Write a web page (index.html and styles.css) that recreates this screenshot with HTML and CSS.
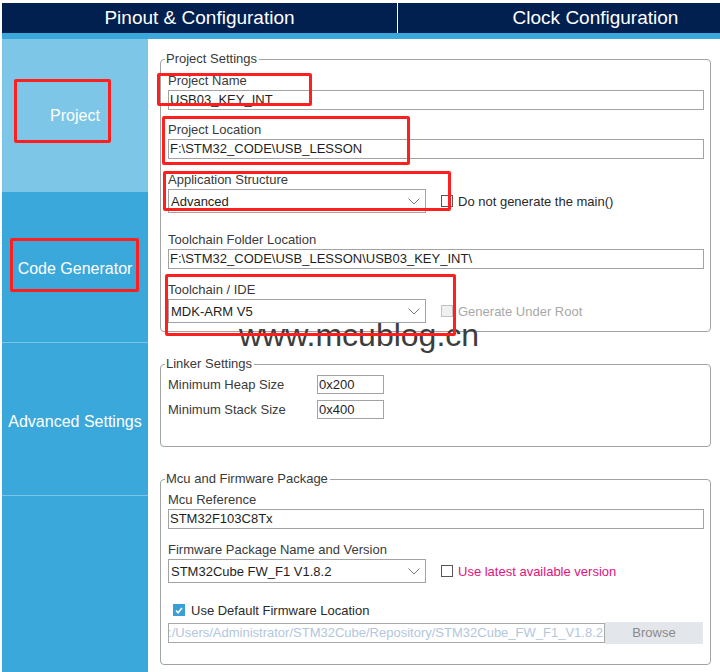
FILE: index.html
```html
<!DOCTYPE html>
<html>
<head>
<meta charset="utf-8">
<link rel="stylesheet" href="styles.css">
</head>
<body>
<div class="app">
  <div class="header">
    <div class="htab htab-first">Pinout &amp; Configuration</div>
    <div class="htab">Clock Configuration</div>
  </div>
  <div class="stripe"></div>
  <div class="main">
    <div class="sidebar">
      <div class="stab stab-active">Project</div>
      <div class="stab stab-code">Code Generator</div>
      <div class="stab stab-adv">Advanced Settings</div>
      <div class="stab stab-rest"></div>
    </div>
    <div class="content">
      <fieldset class="box box-project">
        <legend>Project Settings</legend>
        <div class="field f-gap12">
          <div class="label">Project Name</div>
          <div class="input">USB03_KEY_INT</div>
        </div>
        <div class="field f-gap13">
          <div class="label">Project Location</div>
          <div class="input">F:\STM32_CODE\USB_LESSON</div>
        </div>
        <div class="field f-gap19">
          <div class="label">Application Structure</div>
          <div class="row">
            <div class="select"><span>Advanced</span><svg class="chev" width="12" height="7" viewBox="0 0 12 7"><polyline points="0.5,0.5 6,6 11.5,0.5" fill="none" stroke="#7a7a7a" stroke-width="1"/></svg></div>
            <div class="check"><span class="cb"></span><span class="cbtext">Do not generate the main()</span></div>
          </div>
        </div>
        <div class="field f-gap13">
          <div class="label">Toolchain Folder Location</div>
          <div class="input">F:\STM32_CODE\USB_LESSON\USB03_KEY_INT\</div>
        </div>
        <div class="field">
          <div class="label">Toolchain / IDE</div>
          <div class="row">
            <div class="select"><span>MDK-ARM V5</span><svg class="chev" width="12" height="7" viewBox="0 0 12 7"><polyline points="0.5,0.5 6,6 11.5,0.5" fill="none" stroke="#7a7a7a" stroke-width="1"/></svg></div>
            <div class="check check-disabled"><span class="cb cb-disabled"></span><span class="cbtext">Generate Under Root</span></div>
          </div>
        </div>
      </fieldset>

      <fieldset class="box box-linker">
        <legend>Linker Settings</legend>
        <div class="lrow"><div class="llabel">Minimum Heap Size</div><div class="input small">0x200</div></div>
        <div class="lrow"><div class="llabel">Minimum Stack Size</div><div class="input small">0x400</div></div>
      </fieldset>

      <fieldset class="box box-mcu">
        <legend>Mcu and Firmware Package</legend>
        <div class="field f-gap13">
          <div class="label">Mcu Reference</div>
          <div class="input">STM32F103C8Tx</div>
        </div>
        <div class="field">
          <div class="label">Firmware Package Name and Version</div>
          <div class="row">
            <div class="select"><span>STM32Cube FW_F1 V1.8.2</span><svg class="chev" width="12" height="7" viewBox="0 0 12 7"><polyline points="0.5,0.5 6,6 11.5,0.5" fill="none" stroke="#7a7a7a" stroke-width="1"/></svg></div>
            <div class="check"><span class="cb"></span><span class="cbtext cb-pink">Use latest available version</span></div>
          </div>
        </div>
        <div class="check check-default"><span class="cb cb-checked"><svg width="11" height="11" viewBox="0 0 11 11"><polyline points="2.2,5.6 4.5,8 8.8,2.8" fill="none" stroke="#ffffff" stroke-width="1.8"/></svg></span><span class="cbtext">Use Default Firmware Location</span></div>
        <div class="pathrow">
          <div class="input path"><span>C:/Users/Administrator/STM32Cube/Repository/STM32Cube_FW_F1_V1.8.2</span></div>
          <div class="browse">Browse</div>
        </div>
      </fieldset>
    </div>
  </div>

  <div class="watermark">www.mcublog.cn</div>
  <div class="mark m1"></div>
  <div class="mark m2"></div>
  <div class="mark m3"></div>
  <div class="mark m4"></div>
  <div class="mark m5"></div>
  <div class="mark m6"></div>
</div>
</body>
</html>
```
FILE: styles.css
```css
* { box-sizing: border-box; }
html, body { margin: 0; padding: 0; background: #ffffff; }
body { font-family: "Liberation Sans", Arial, sans-serif; width: 720px; height: 672px; overflow: hidden; }

.app { position: relative; width: 720px; height: 672px; padding: 3px 0 0 2px; overflow: hidden; }

.header { display: flex; height: 30px; background: #02204f; width: 800px; }
.htab { width: 395px; flex: none; color: #ffffff; font-size: 19px; line-height: 30px; text-align: center; }
.htab-first { border-right: 1px solid #ffffff; width: 396px; }
.stripe { height: 6px; background: #3ba8db; width: 720px; }

.main { display: flex; height: 633px; }
.sidebar { width: 146px; flex: none; display: flex; flex-direction: column; background: #3ba8db; }
.stab { color: #ffffff; font-size: 16px; display: flex; align-items: center; justify-content: center; flex: none; }
.stab-active { background: #7dc6e8; height: 153px; }
.stab-code { height: 151px; border-bottom: 1px solid #7cc3e9; padding-top: 4px; }
.stab-adv { height: 153px; border-bottom: 1px solid #7cc3e9; padding-top: 6px; }
.stab-rest { flex: 1; }

.content { flex: 1; padding: 12px 9px 0 12px; color: #3a3a3a; font-size: 13px; }

.box { margin: 0; border: 1px solid #a3a3a3; border-radius: 4px; min-width: 0; }
.box legend { padding: 0 2px 0 1px; margin-left: -3px; line-height: 16px; font-size: 13px; color: #3a3a3a; }
.box-project { padding: 6px 6px 8px 7px; margin-bottom: 24px; }
.box-linker { padding: 0 6px 24px 7px; margin-bottom: 24px; }
.box-mcu { padding: 5px 6px 20px 7px; }

.label { line-height: 16px; height: 16px; margin-bottom: 1px; }
.f-gap12 { margin-bottom: 12px; }
.f-gap13 { margin-bottom: 13px; }
.f-gap19 { margin-bottom: 19px; }

.input { height: 20px; border: 1px solid #a3a3a3; background: #ffffff; color: #1e1e1e; line-height: 18px; padding: 0 1px; white-space: nowrap; overflow: hidden; }

.row { display: flex; align-items: center; margin-top: 1px; }
.select { width: 258px; height: 24px; border: 1px solid #a3a3a3; display: flex; align-items: center; justify-content: space-between; padding: 0 5px 0 2px; color: #1e1e1e; flex: none; }
.chev { display: block; }

.check { display: flex; align-items: center; margin-left: 15px; }
.cb { width: 12px; height: 12px; border: 1px solid #555555; background: #ffffff; flex: none; display: flex; align-items: center; justify-content: center; }
.cbtext { margin-left: 5px; color: #2a2a2a; }
.check-disabled .cbtext { color: #a8a8a8; }
.cb-disabled { border-color: #c2c2c2; background: #eef0f2; }
.cb-pink { color: #e0127e; }

.check-default { margin: 19px 0 0 5px; height: 16px; }
.cb-checked { background: #3a9fd6; border-color: #3a9fd6; }
.check-default .cbtext { margin-left: 6px; }

.pathrow { display: flex; align-items: center; margin-top: 4px; height: 22px; }
.path { width: 437px; flex: none; display: flex; justify-content: flex-end; color: #b3c6dd; border-color: #a8a8a8; }
.path span { flex: none; }
.browse { width: 98px; height: 22px; background: #e3e6ea; color: #8a8a8a; text-align: center; line-height: 22px; flex: none; font-size: 13px; }

.lrow { display: flex; align-items: center; height: 25px; }
.llabel { width: 149px; flex: none; }
.input.small { width: 67px; height: 19px; line-height: 17px; }

.watermark { position: absolute; left: 239px; top: 317px; font-size: 32px; line-height: 36px; color: #3d3d3d; white-space: nowrap; }

.mark { position: absolute; border: 3px solid #ff1f1f; border-radius: 2px; }
.m1 { left: 14px; top: 79px; width: 97px; height: 64px; }
.m2 { left: 10px; top: 238px; width: 129px; height: 54px; }
.m3 { left: 157px; top: 73px; width: 155px; height: 33px; }
.m4 { left: 162px; top: 116px; width: 248px; height: 49px; }
.m5 { left: 163px; top: 171px; width: 288px; height: 40px; }
.m6 { left: 165px; top: 274px; width: 291px; height: 62px; }
```
